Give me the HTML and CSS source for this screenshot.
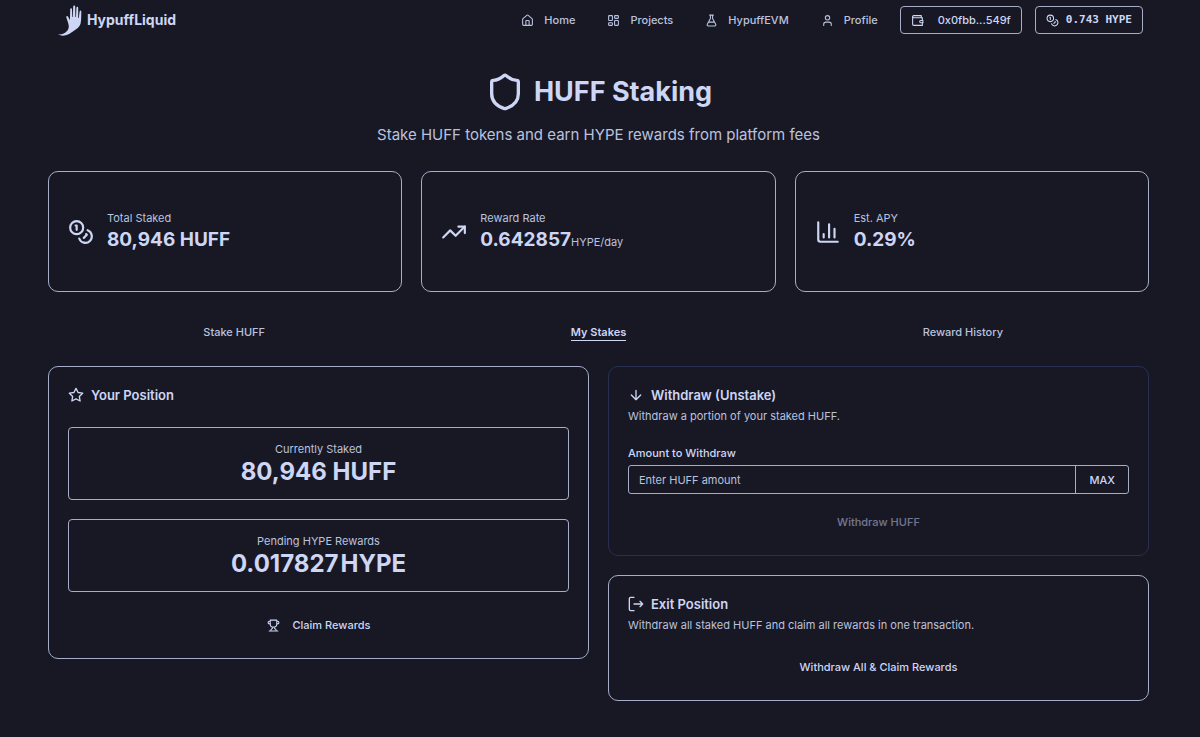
FILE: index.html
```html
<!DOCTYPE html>
<html lang="en">
<head>
    <meta charset="utf-8">
    <meta name="viewport" content="width=device-width, initial-scale=1">
    <title>HUFF Staking</title>
    <link rel="stylesheet" href="styles.css">
</head>
<body>

    <!-- Icons shared by several elements -->
    <svg class="sprite" aria-hidden="true">
        <symbol id="coins" viewBox="0 0 24 24">
            <circle cx="8" cy="8" r="6"/>
            <path d="M18.09 10.37A6 6 0 1 1 10.34 18M7 6h1v4M16.71 13.88l.7.71-2.82 2.82"/>
        </symbol>
    </svg>

    <header class="header">
        <a class="brand" href="#">
            <svg class="logo" viewBox="0 0 26 32" aria-hidden="true">
                <path d="M1 30.500C5 30.800 8 29.600 10.500 26.500C12 24.500 12 22 11.300 19.500L9.300 13.200C9 11.900 10.400 11.400 11 12.600L12.900 16.200L13.200 5.500C13.300 3.900 15 3.900 15 5.500L15.300 13L15.900 13L16.200 2.600C16.300 1 18.200 1 18.200 2.600L18.400 13L19 13L19.400 3.800C19.500 2.300 21.200 2.300 21.200 3.800L21.200 14L21.800 14L22.600 7.400C22.800 6 24.400 6.200 24.300 7.600C24.200 12 24.400 16 23.600 19.500C22.800 22.700 20.700 24.200 18 26C13 30 7 33.500 1 30.500Z"/>
            </svg>
            <span>HypuffLiquid</span>
        </a>
        <nav class="nav">
            <a href="#">
                <svg class="icon icon-sm" viewBox="0 0 24 24"><path d="M15 21v-8a1 1 0 0 0-1-1h-4a1 1 0 0 0-1 1v8M3 10a2 2 0 0 1 .709-1.528l7-6a2 2 0 0 1 2.582 0l7 6A2 2 0 0 1 21 10v9a2 2 0 0 1-2 2H5a2 2 0 0 1-2-2z"/></svg>
                Home
            </a>
            <a href="#">
                <svg class="icon icon-sm" viewBox="0 0 24 24"><rect x="3" y="3" width="7" height="9" rx="1"/><rect x="14" y="3" width="7" height="5" rx="1"/><rect x="14" y="12" width="7" height="9" rx="1"/><rect x="3" y="16" width="7" height="5" rx="1"/></svg>
                Projects
            </a>
            <a href="#">
                <svg class="icon icon-sm" viewBox="0 0 24 24"><path d="M14 2v6a2 2 0 0 0 .245.960l5.510 10.080A2 2 0 0 1 18 22H6a2 2 0 0 1-1.755-2.960l5.510-10.080A2 2 0 0 0 10 8V2M6.453 15h11.094M8.500 2h7"/></svg>
                HypuffEVM
            </a>
            <a href="#">
                <svg class="icon icon-sm" viewBox="0 0 24 24"><path d="M19 21v-2a4 4 0 0 0-4-4H9a4 4 0 0 0-4 4v2"/><circle cx="12" cy="7" r="4"/></svg>
                Profile
            </a>
        </nav>
        <div class="account">
            <button class="btn-outline wallet" type="button">
                <svg class="icon icon-sm" viewBox="0 0 24 24"><path d="M21 12V7H5a2 2 0 0 1 0-4h14v4"/><path d="M3 5v14a2 2 0 0 0 2 2h16v-5"/><path d="M18 12a2 2 0 0 0 0 4h4v-4Z"/></svg>
                0x0fbb...549f
            </button>
            <button class="btn-outline balance" type="button">
                <svg class="icon icon-sm"><use href="#coins"/></svg>
                0.743 HYPE
            </button>
        </div>
    </header>

    <main class="page">
        <div class="hero">
            <h1>
                <svg class="icon icon-xl" viewBox="0 0 24 24"><path d="M20 13c0 5-3.500 7.500-7.660 8.950a1 1 0 0 1-.670-.010C7.500 20.500 4 18 4 13V6a1 1 0 0 1 1-1c2 0 4.500-1.200 6.240-2.720a1.170 1.170 0 0 1 1.520 0C14.510 3.810 17 5 19 5a1 1 0 0 1 1 1z"/></svg>
                HUFF Staking
            </h1>
            <p>Stake HUFF tokens and earn HYPE rewards from platform fees</p>
        </div>

        <div class="stats">
            <div class="card stat">
                <svg class="icon icon-lg"><use href="#coins"/></svg>
                <div>
                    <div class="label">Total Staked</div>
                    <div class="value">80,946 HUFF</div>
                </div>
            </div>
            <div class="card stat">
                <svg class="icon icon-lg" viewBox="0 0 24 24"><path d="M22 7l-8.500 8.500-5-5L2 17"/><path d="M16 7h6v6"/></svg>
                <div>
                    <div class="label">Reward Rate</div>
                    <div class="value">0.642857<span class="unit">HYPE/day</span></div>
                </div>
            </div>
            <div class="card stat">
                <svg class="icon icon-lg" viewBox="0 0 24 24"><path d="M3 3v16a2 2 0 0 0 2 2h16M18 17V9M13 17V5M8 17v-3"/></svg>
                <div>
                    <div class="label">Est. APY</div>
                    <div class="value">0.29%</div>
                </div>
            </div>
        </div>

        <div class="tabs" role="tablist">
            <button type="button" role="tab"><span>Stake HUFF</span></button>
            <button class="active" type="button" role="tab" aria-selected="true"><span>My Stakes</span></button>
            <button type="button" role="tab"><span>Reward History</span></button>
        </div>

        <div class="columns">
            <section class="card panel position">
                <h2>
                    <svg class="icon icon-md" viewBox="0 0 24 24"><path d="M12 2l3.090 6.260L22 9.270l-5 4.870 1.180 6.880L12 17.770l-6.180 3.250L7 14.140 2 9.270l6.910-1.010z"/></svg>
                    Your Position
                </h2>
                <div class="box">
                    <div class="label">Currently Staked</div>
                    <div class="amount">80,946 HUFF</div>
                </div>
                <div class="box">
                    <div class="label">Pending HYPE Rewards</div>
                    <div class="amount">0.017827<span class="token">HYPE</span></div>
                </div>
                <button class="btn-ghost" type="button">
                    <svg class="icon icon-sm" viewBox="0 0 24 24"><path d="M6 9H4.500a2.500 2.500 0 0 1 0-5H6M18 9h1.500a2.500 2.500 0 0 0 0-5H18M4 22h16M10 14.660V17c0 .550-.470.980-.970 1.210C7.850 18.750 7 20.240 7 22M14 14.660V17c0 .550.470.980.970 1.210C16.150 18.750 17 20.240 17 22M18 2H6v7a6 6 0 0 0 12 0V2Z"/></svg>
                    Claim Rewards
                </button>
            </section>

            <div class="stack">
                <section class="card panel withdraw">
                    <h2>
                        <svg class="icon icon-md" viewBox="0 0 24 24"><path d="M12 5v14M19 12l-7 7-7-7"/></svg>
                        Withdraw (Unstake)
                    </h2>
                    <p>Withdraw a portion of your staked HUFF.</p>
                    <label for="amount">Amount to Withdraw</label>
                    <div class="field">
                        <input id="amount" type="text" placeholder="Enter HUFF amount">
                        <button type="button">MAX</button>
                    </div>
                    <button class="btn-ghost" type="button" disabled>Withdraw HUFF</button>
                </section>

                <section class="card panel exit">
                    <h2>
                        <svg class="icon icon-md" viewBox="0 0 24 24"><path d="M9 22H4a2 2 0 0 1-2-2V4a2 2 0 0 1 2-2h5M18 16l4-4-4-4M22 12H9"/></svg>
                        Exit Position
                    </h2>
                    <p>Withdraw all staked HUFF and claim all rewards in one transaction.</p>
                    <button class="btn-ghost" type="button">Withdraw All &amp; Claim Rewards</button>
                </section>
            </div>
        </div>
    </main>

</body>
</html>
```

FILE: styles.css
```css
:root {
    --bg: #181825;
    --text: #cdd6f4;
    --muted: #bac2de;
    --border: #a6adc8;
    --border-dim: #27304e;
}

* {
    box-sizing: border-box;
}

body {
    margin: 0;
    background: var(--bg);
    color: var(--text);
    font-family: Inter, "Liberation Sans", sans-serif;
    font-size: 11px;
    line-height: 16px;
}

h1, h2, p {
    margin: 0;
}

a {
    color: inherit;
    text-decoration: none;
}

button, input {
    font: inherit;
    color: inherit;
    background: none;
    border: 0;
    padding: 0;
}

button {
    font-weight: 500;
    cursor: pointer;
}

/* Icons */

.sprite {
    display: none;
}

.icon {
    flex: none;
    fill: none;
    stroke: currentColor;
    stroke-width: 2;
    stroke-linecap: round;
    stroke-linejoin: round;
}

.icon-sm {
    width: 13px;
    height: 13px;
}

.icon-md {
    width: 16px;
    height: 16px;
}

.icon-lg {
    width: 26px;
    height: 26px;
}

.icon-xl {
    width: 40px;
    height: 40px;
}

/* Header */

.header {
    display: flex;
    align-items: center;
    height: 40px;
    padding: 0 57px;
}

.brand {
    display: flex;
    align-items: center;
    gap: 4px;
    margin-right: auto;
    font-size: 14px;
    font-weight: 700;
}

.logo {
    width: 26px;
    height: 32px;
    fill: var(--text);
}

.nav {
    display: flex;
    gap: 32px;
    font-weight: 500;
    color: var(--muted);
}

.nav a {
    display: flex;
    align-items: center;
    gap: 10px;
}

.account {
    display: flex;
    gap: 13px;
    margin-left: 22px;
}

.btn-outline {
    display: flex;
    align-items: center;
    height: 28px;
    padding: 0 10px;
    border: 1px solid var(--border);
    border-radius: 4px;
}

.wallet {
    gap: 14px;
}

.balance {
    gap: 7px;
    font-family: "DejaVu Sans Mono", monospace;
    font-weight: 700;
}

/* Page */

.page {
    padding: 32px 51px 36px 48px;
}

.hero {
    text-align: center;
}

.hero h1 {
    display: flex;
    align-items: center;
    justify-content: center;
    gap: 9px;
    font-size: 27px;
    font-weight: 700;
    line-height: 40px;
}

.hero p {
    margin-top: 11px;
    font-size: 15px;
    line-height: 24px;
    color: var(--muted);
}

.card {
    border: 1px solid var(--border);
    border-radius: 10px;
}

.label {
    color: var(--muted);
}

/* Stats */

.stats {
    display: grid;
    grid-template-columns: repeat(3, 1fr);
    gap: 19px;
    margin-top: 24px;
}

.stat {
    display: flex;
    align-items: center;
    gap: 13px;
    padding: 38px 19px;
}

.stat .value {
    font-size: 19px;
    font-weight: 700;
    line-height: 27px;
}

.stat .unit {
    font-size: 11px;
    font-weight: 400;
    line-height: 11px;
    color: var(--muted);
}

/* Tabs */

.tabs {
    display: grid;
    grid-template-columns: repeat(3, 1fr);
    margin-top: 24px;
    padding: 4px;
}

.tabs button {
    height: 24px;
    color: var(--muted);
}

.tabs .active {
    font-weight: 600;
    color: var(--text);
}

.tabs .active span {
    padding-bottom: 1px;
    border-bottom: 1px solid var(--text);
}

/* Panels */

.columns {
    display: grid;
    grid-template-columns: 1fr 1fr;
    align-items: start;
    gap: 19px;
    margin-top: 18px;
}

.stack {
    display: grid;
    gap: 19px;
}

.panel {
    padding: 19px;
}

.panel h2 {
    display: flex;
    align-items: center;
    gap: 7px;
    font-size: 13px;
    font-weight: 600;
    line-height: 18px;
}

.panel p {
    margin-top: 4px;
    color: var(--muted);
}

.box {
    margin-top: 19px;
    padding: 13px;
    border: 1px solid var(--border);
    border-radius: 4px;
    text-align: center;
}

.panel h2 + .box {
    margin-top: 23px;
}

.amount {
    font-size: 24px;
    font-weight: 700;
    line-height: 29px;
}

.token {
    margin-left: 2px;
}

.btn-ghost {
    display: flex;
    align-items: center;
    justify-content: center;
    gap: 13px;
    width: 100%;
    height: 28px;
    margin-top: 19px;
}

.btn-ghost:disabled {
    opacity: 0.5;
    cursor: default;
}

.withdraw {
    border-color: var(--border-dim);
}

.withdraw label {
    display: block;
    margin-top: 21px;
    font-weight: 500;
}

.field {
    display: flex;
    height: 29px;
    margin-top: 4px;
    border: 1px solid var(--border);
    border-radius: 3px;
}

.field input {
    flex: 1;
    min-width: 0;
    padding: 0 10px;
}

.field input::placeholder {
    color: var(--muted);
    opacity: 1;
}

.field button {
    padding: 0 13px;
    border-left: 1px solid var(--border);
}

.withdraw .btn-ghost {
    margin-top: 14px;
}

.exit .btn-ghost {
    margin-top: 20px;
}
```
